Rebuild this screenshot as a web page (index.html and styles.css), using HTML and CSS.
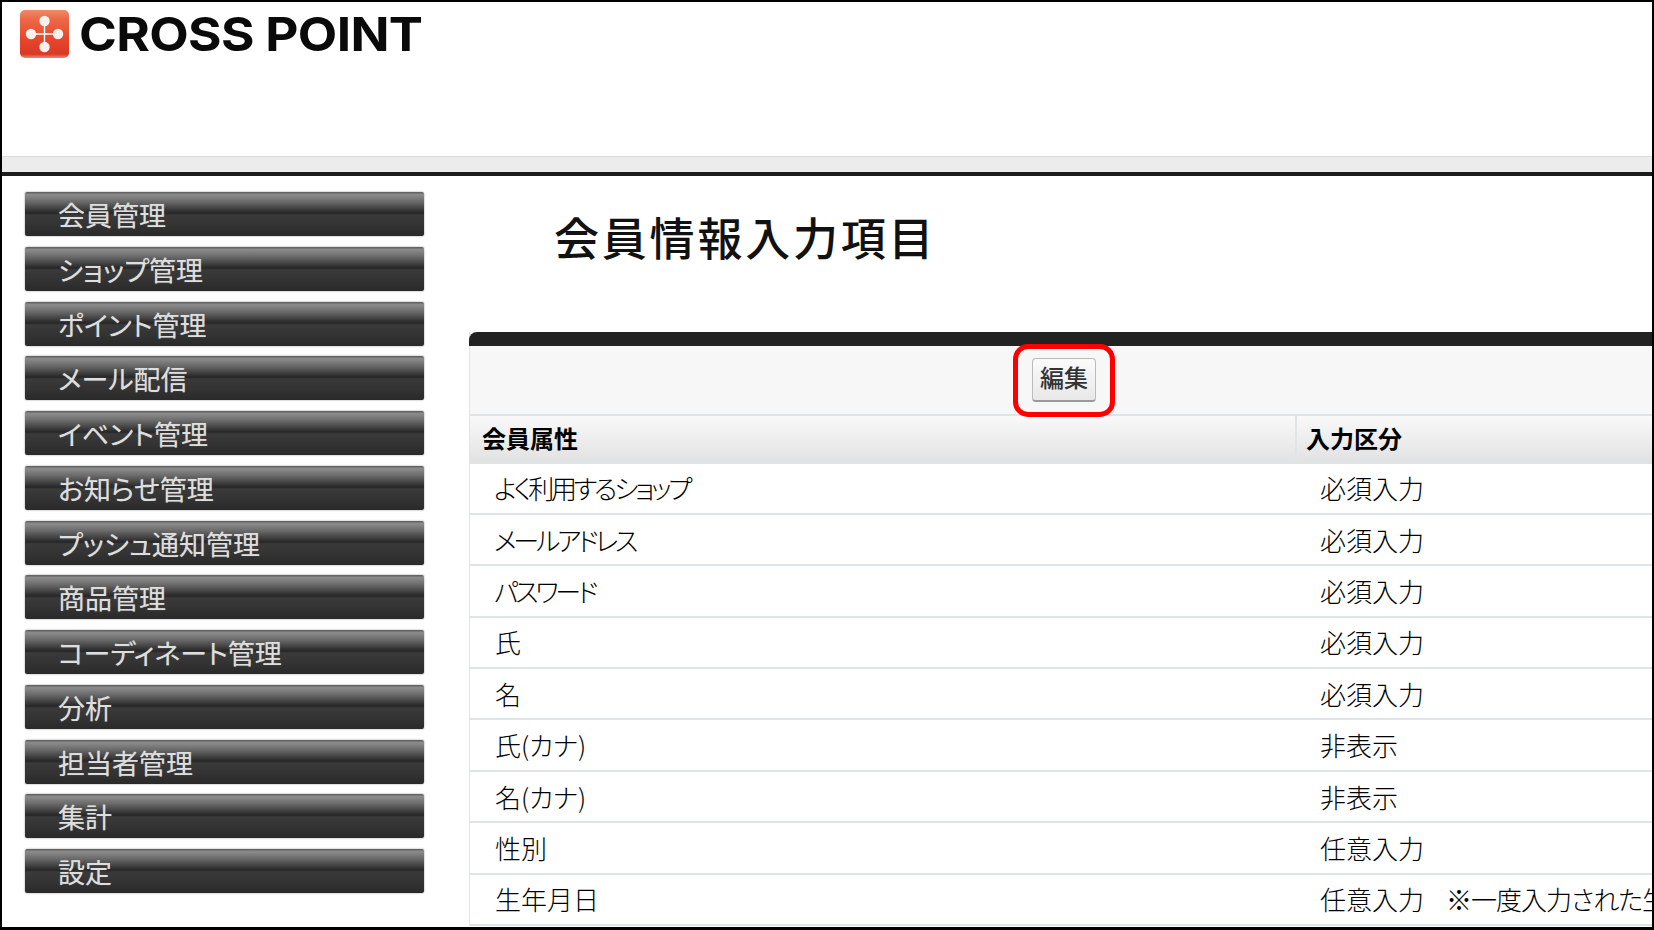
FILE: index.html
```html
<!DOCTYPE html>
<html lang="ja">
<head>
    <meta charset="UTF-8">
    <title>会員情報入力項目</title>
    <link rel="stylesheet" href="styles.css">
</head>
<body>
    <div class="frame">
        <header class="site-header">
            <div class="logo">
                <svg class="logo-mark" width="49" height="48" viewBox="0 0 49 48">
                    <defs>
                        <linearGradient id="logoFill" x1="0" y1="0" x2="0" y2="1">
                            <stop offset="0" stop-color="#ee8a68"/>
                            <stop offset="0.18" stop-color="#ec6a48"/>
                            <stop offset="0.6" stop-color="#e8462c"/>
                            <stop offset="0.92" stop-color="#d93a25"/>
                            <stop offset="1" stop-color="#e98a78"/>
                        </linearGradient>
                    </defs>
                    <rect width="49" height="48" rx="5" fill="url(#logoFill)"/>
                    <path d="M24.5 10V38M10 24H39" stroke="#fff" stroke-width="1.4"/>
                    <circle cx="24.5" cy="11" r="5.2" fill="#f6f0ee"/>
                    <circle cx="24.5" cy="37" r="5.2" fill="#f6f0ee"/>
                    <circle cx="11" cy="24" r="5.2" fill="#f6f0ee"/>
                    <circle cx="38" cy="24" r="5.2" fill="#f6f0ee"/>
                </svg>
                <span class="logo-text">CROSS POINT</span>
            </div>
        </header>
        <div class="header-strip"></div>

        <div class="layout">
            <nav class="side-menu">
                <a class="menu-item">会員管理</a>
                <a class="menu-item">ショップ管理</a>
                <a class="menu-item">ポイント管理</a>
                <a class="menu-item">メール配信</a>
                <a class="menu-item">イベント管理</a>
                <a class="menu-item">お知らせ管理</a>
                <a class="menu-item">プッシュ通知管理</a>
                <a class="menu-item">商品管理</a>
                <a class="menu-item">コーディネート管理</a>
                <a class="menu-item">分析</a>
                <a class="menu-item">担当者管理</a>
                <a class="menu-item">集計</a>
                <a class="menu-item">設定</a>
            </nav>

            <main class="content">
                <h1 class="page-title">会員情報入力項目</h1>

                <section class="panel">
                    <div class="panel-bar"></div>
                    <div class="toolbar">
                        <span class="highlight"><button class="edit-button">編集</button></span>
                    </div>
                    <div class="row row-head">
                        <div class="col-name">会員属性</div>
                        <div class="col-type">入力区分</div>
                    </div>
                    <div class="row"><div class="col-name kana">よく利用するショップ</div><div class="col-type">必須入力</div></div>
                    <div class="row"><div class="col-name kana">メールアドレス</div><div class="col-type">必須入力</div></div>
                    <div class="row"><div class="col-name kana">パスワード</div><div class="col-type">必須入力</div></div>
                    <div class="row"><div class="col-name">氏</div><div class="col-type">必須入力</div></div>
                    <div class="row"><div class="col-name">名</div><div class="col-type">必須入力</div></div>
                    <div class="row"><div class="col-name">氏(カナ)</div><div class="col-type">非表示</div></div>
                    <div class="row"><div class="col-name">名(カナ)</div><div class="col-type">非表示</div></div>
                    <div class="row"><div class="col-name">性別</div><div class="col-type">任意入力</div></div>
                    <div class="row"><div class="col-name">生年月日</div><div class="col-type">任意入力<span class="note">※一度入力された生</span></div></div>
                </section>
            </main>
        </div>
    </div>
</body>
</html>
```

FILE: styles.css
```css
html, body {
    margin: 0;
    height: 100%;
}

body {
    font-family: "Noto Sans CJK JP", "Liberation Sans", sans-serif;
    background-color: #fff;
    color: #000;
    overflow: hidden;
}

.frame {
    box-sizing: border-box;
    height: 930px;
    border: 2px solid #000;
    border-bottom-width: 3px;
    display: flex;
    flex-direction: column;
    overflow: hidden;
}

/* Header */
.site-header {
    height: 154px;
    flex: none;
    box-sizing: border-box;
    padding: 8px 0 0 18px;
}

.logo {
    display: flex;
    align-items: flex-start;
    gap: 10px;
}

.logo-mark {
    flex: none;
    filter: blur(0.5px);
}

.logo-text {
    font-family: Inter, "Liberation Sans", sans-serif;
    font-size: 47px;
    font-weight: 700;
    line-height: 48px;
    letter-spacing: -0.6px;
    color: #0a0a0a;
    filter: blur(0.4px);
    transform: scaleX(1.09);
    transform-origin: left center;
}

.header-strip {
    flex: none;
    height: 15px;
    background-color: #ececec;
    border-top: 1px solid #ddd;
    border-bottom: 4px solid #1c1c1c;
    box-sizing: content-box;
}

.layout {
    flex: 1;
    min-height: 0;
    display: flex;
}

/* Side menu */
.side-menu {
    flex: none;
    width: 399px;
    margin: 16px 0 0 23px;
    display: flex;
    flex-direction: column;
    gap: 10.75px;
}

.menu-item {
    height: 44px;
    box-sizing: border-box;
    padding: 2px 0 0 33px;
    border-radius: 2px;
    background: linear-gradient(to bottom, #5a5a5a 0, #8c8c8c 6%, #6a6a6a 22%, #262626 48%, #3a3a3a 52%, #333 75%, #2a2a2a 100%);
    box-shadow: 0 0 2px rgba(0, 0, 0, 0.45);
    color: #dedede;
    font-size: 27px;
    line-height: 42px;
    font-feature-settings: "palt";
    text-shadow: 0 0 1px rgba(255, 255, 255, 0.35);
    white-space: nowrap;
}

/* Main content */
.content {
    flex: 1;
    min-width: 0;
    margin-left: 45px;
    overflow: hidden;
}

.page-title {
    height: 156px;
    margin: 0;
    box-sizing: border-box;
    padding: 31px 0 0 85px;
    font-size: 45px;
    font-weight: 500;
    line-height: 60px;
    letter-spacing: 2.8px;
    color: #111;
}

.panel {
    border-left: 1px solid #e2e5e8;
}

.panel-bar {
    height: 14px;
    margin-left: -1px;
    background-color: #222;
    border-radius: 8px 0 0 0;
}

.toolbar {
    height: 68px;
    background-color: #f7f7f7;
    display: flex;
    justify-content: center;
    padding-left: 6px;
}

.highlight {
    box-sizing: border-box;
    height: 73px;
    width: 102px;
    margin-top: -2px;
    border: 5px solid #f00;
    border-radius: 15px;
    display: flex;
    align-items: center;
    justify-content: center;
    position: relative;
    z-index: 1;
}

.edit-button {
    box-sizing: border-box;
    width: 64px;
    height: 44px;
    margin-top: -1px;
    padding: 0 0 5px;
    font-family: inherit;
    font-size: 24px;
    font-weight: 500;
    line-height: 34px;
    color: #333;
    background: linear-gradient(to bottom, #fbfbfb, #e8e8e8);
    border: 1px solid #bbb;
    border-bottom: 2px solid #999;
    border-radius: 4px;
}

.row {
    box-sizing: border-box;
    height: 51.4px;
    padding-bottom: 1px;
    display: flex;
    align-items: center;
    border-bottom: 2px solid #dfe4e7;
    font-size: 26px;
    font-weight: 300;
    font-feature-settings: "palt";
    white-space: nowrap;
}

.col-name {
    flex: none;
    width: 825px;
    box-sizing: border-box;
    padding-left: 25px;
}

.col-name.kana {
    padding-left: 24px;
    letter-spacing: -3.2px;
}

.col-type {
    flex: 1;
    padding-left: 25px;
}

.note {
    margin-left: 22px;
    letter-spacing: -1px;
}

.row-head {
    height: 49.5px;
    padding-bottom: 0;
    align-items: stretch;
    border-top: 2px solid #dfe4e7;
    background: linear-gradient(to bottom, #f9f9f9, #e2e2e2);
    font-size: 24px;
    font-weight: 700;
}

.row-head .col-name,
.row-head .col-type {
    display: flex;
    align-items: center;
    padding-left: 12px;
    padding-bottom: 2px;
}

.row-head .col-type {
    border-left: 2px solid #dfe4e7;
    padding-left: 9px;
}
```
